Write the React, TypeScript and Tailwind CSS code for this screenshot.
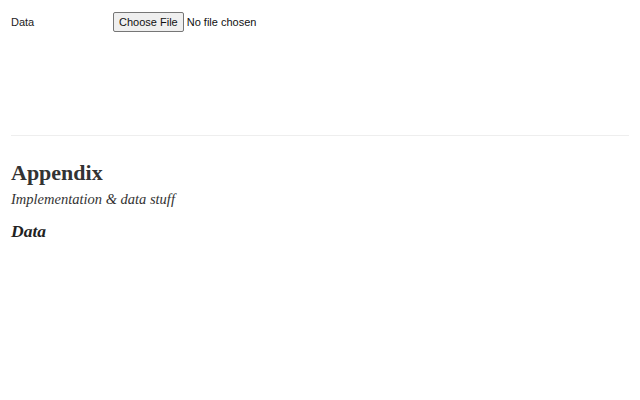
export default function App() {
  const sans = { fontFamily: '"Liberation Sans", Arial, sans-serif' };
  return (
    <div className="w-[640px] h-[400px] bg-white px-[11px] text-[#333]">
      <div className="pt-[13px] h-[135px]">
        <div className="flex items-center h-[18px]">
          <label className="w-[102px] text-[11px] text-[#222]" style={sans}>Data</label>
          <input
            type="file"
            className="text-[11px] text-[#111] file:mr-[3px] file:rounded-[2px] file:border file:border-solid file:border-[#767676] file:bg-[#efefef] file:px-[5px] file:py-[1px] file:text-[11px] file:text-[#111]"
            style={sans}
          />
        </div>
      </div>
      <hr className="border-0 border-t border-[#eeeeee]" />
      <div style={{ fontFamily: '"Liberation Serif", "Times New Roman", serif' }}>
        <h1 className="mt-[23px] text-[22px] font-bold leading-[28px] text-[#333]">Appendix</h1>
        <h2 className="mt-[2px] text-[14.5px] italic leading-[20px] text-[#333]">Implementation &amp; data stuff</h2>
        <h3 className="mt-[10px] text-[17.5px] font-bold italic leading-[24px] text-[#222]">Data</h3>
      </div>
    </div>
  );
}
